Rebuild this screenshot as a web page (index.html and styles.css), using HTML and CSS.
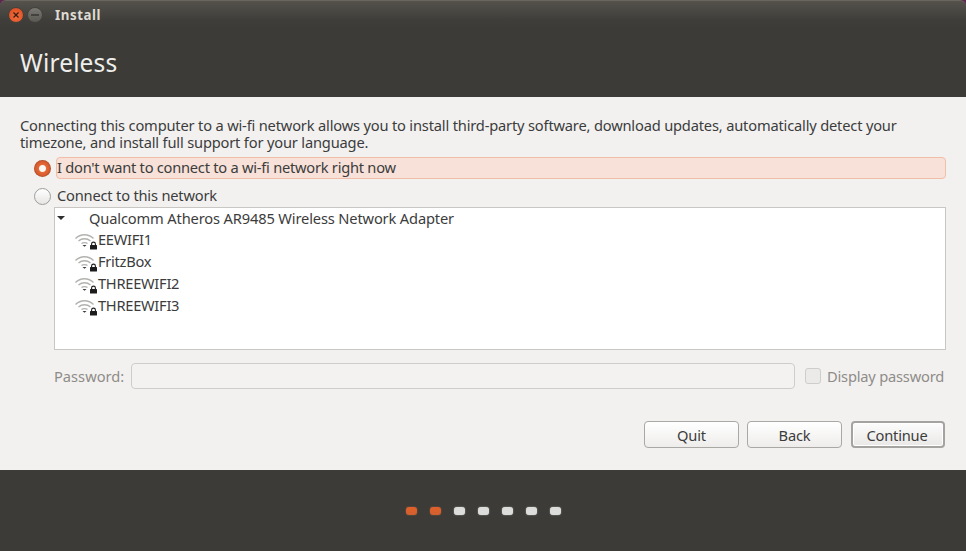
FILE: index.html
```html
<!DOCTYPE html>
<html lang="en">
<head>
<meta charset="utf-8">
<title>Install</title>
<link rel="stylesheet" href="styles.css">
</head>
<body>
<div class="window">
  <header class="titlebar">
    <span class="wm wm-close"><svg width="10" height="10" viewBox="0 0 10 10"><path d="M2.5 2.5l5 5M7.5 2.5l-5 5" stroke="#3c1a10" stroke-width="1.3"/></svg></span>
    <span class="wm wm-min"><svg width="10" height="10" viewBox="0 0 10 10"><path d="M1 5h8" stroke="#2e2d2a" stroke-width="1.3"/></svg></span>
    <span class="app-title">Install</span>
  </header>
  <div class="heading"><h1>Wireless</h1></div>
  <main class="content">
    <p class="intro">Connecting this computer to a wi-fi network allows you to install third-party software, download updates, automatically detect your timezone, and install full support for your language.</p>
    <div class="option option-selected">
      <span class="radio radio-on"></span>
      <span class="option-label">I don't want to connect to a wi-fi network right now</span>
    </div>
    <div class="option option-plain">
      <span class="radio"></span>
      <span class="option-label">Connect to this network</span>
    </div>
    <div class="netlist">
      <div class="adapter"><span class="arrow"></span><span>Qualcomm Atheros AR9485 Wireless Network Adapter</span></div>
      <div class="net"><svg class="wifi" width="24" height="20" viewBox="0 0 24 20"><use href="#wifi-icon"/></svg><span>EEWIFI1</span></div>
      <div class="net"><svg class="wifi" width="24" height="20" viewBox="0 0 24 20"><use href="#wifi-icon"/></svg><span>FritzBox</span></div>
      <div class="net"><svg class="wifi" width="24" height="20" viewBox="0 0 24 20"><use href="#wifi-icon"/></svg><span>THREEWIFI2</span></div>
      <div class="net"><svg class="wifi" width="24" height="20" viewBox="0 0 24 20"><use href="#wifi-icon"/></svg><span>THREEWIFI3</span></div>
    </div>
    <div class="password-row">
      <label class="pw-label">Password:</label>
      <div class="pw-input"></div>
      <span class="check"></span>
      <span class="pw-show">Display password</span>
    </div>
    <div class="actions">
      <button class="btn">Quit</button>
      <button class="btn">Back</button>
      <button class="btn btn-default">Continue</button>
    </div>
  </main>
  <footer class="progress">
    <span class="dot dot-done"></span>
    <span class="dot dot-done"></span>
    <span class="dot"></span>
    <span class="dot"></span>
    <span class="dot"></span>
    <span class="dot"></span>
    <span class="dot"></span>
  </footer>
</div>
<svg class="defs" width="0" height="0">
  <defs>
    <g id="wifi-icon">
      <g fill="none" stroke="#b2b2ae" stroke-width="1.4">
        <path d="M1.5 8.5C6.5 3.5 14.5 3.5 19.5 8.5"/>
        <path d="M4.5 11C8 8 13 8 16.5 11"/>
        <path d="M7.5 13.5C9 12.3 12 12.3 13.5 13.5"/>
      </g>
      <path d="M8.5 15h4l-2 1.8z" fill="#3a3a3a"/>
      <rect x="16" y="15" width="7" height="4.5" rx="0.5" fill="#1c1c1c"/>
      <path d="M17.6 15.2v-1.2a1.9 1.9 0 0 1 3.8 0v1.2" fill="none" stroke="#1c1c1c" stroke-width="1.1"/>
    </g>
  </defs>
</svg>
</body>
</html>
```
FILE: styles.css
```css
* { box-sizing: border-box; }
html, body { margin: 0; padding: 0; background: #5e2750; }
body { width: 966px; height: 551px; overflow: hidden; font-family: "Noto Sans", "Open Sans", sans-serif; font-size: 14.67px; color: #3c3c3c; }
.window { width: 966px; height: 551px; display: flex; flex-direction: column; }
.titlebar { height: 28px; flex: none; display: flex; align-items: center; padding: 0 0 0 8px; gap: 3px; border-radius: 6px 6px 0 0; background: linear-gradient(#55524c, #3f3e3a 70%, #3c3b37); border-top: 1px solid #6a665f; }
.wm { width: 16px; height: 16px; border-radius: 50%; display: flex; align-items: center; justify-content: center; }
.wm-close { background: radial-gradient(circle at 50% 60%, #f2733f, #d9431c); border: 1px solid #45403a; }
.wm-min { background: linear-gradient(#7a7872, #5a5852); border: 1px solid #45403a; }
.app-title { margin-left: 9px; color: #dfdbd2; font-size: 13.3px; font-weight: 700; letter-spacing: 0.55px; }
.heading { height: 69px; flex: none; background: #3c3b37; padding: 19px 0 0 20px; }
h1 { margin: 0; color: #eeeeec; font-size: 24.5px; line-height: 32px; font-weight: 400; letter-spacing: 0.15px; }
.content { height: 373px; flex: none; background: #f2f1f0; padding: 20px 20px 0; display: flex; flex-direction: column; }
.intro { margin: 0; line-height: 17px; height: 34px; width: 900px; letter-spacing: -0.18px; }
.option { display: flex; align-items: center; gap: 5px; height: 22px; }
.option-selected { margin-top: 6px; margin-left: 14px; }
.option-plain { margin-top: 6px; margin-left: 14px; }
.option-label { flex: 1; height: 22px; line-height: 18px; letter-spacing: -0.25px; border: 1px solid transparent; }
.option-plain .option-label { letter-spacing: -0.2px; }
.option-selected .option-label { background: #f7e1d8; border-color: #f0bda9; border-radius: 4px; }
.radio { width: 17px; height: 17px; border-radius: 50%; background: linear-gradient(#fff, #e6e5e3); border: 1px solid #9d9d99; flex: none; }
.radio-on { border: 0; background: radial-gradient(circle, #fbf6f2 0 3px, #e3693a 4px, #d85a2c 7px, #a54a2b 8.5px); }
.netlist { margin: 0 0 0 34px; height: 143px; background: #fff; border: 1px solid #c9c7c4; }
.adapter { height: 21px; display: flex; align-items: center; letter-spacing: -0.15px; padding-left: 2px; padding-bottom: 2px; }
.arrow { width: 0; height: 0; border-left: 4px solid transparent; border-right: 4px solid transparent; border-top: 4px solid #2e2e2e; margin-right: 24px; margin-top: 1px; }
.net { height: 22px; display: flex; align-items: center; padding-left: 19px; letter-spacing: -0.28px; }
.net span { margin-top: -2px; }
.wifi { flex: none; display: block; }
.defs { position: absolute; }
.password-row { margin: 13px 0 0 34px; height: 26px; display: flex; align-items: center; color: #8f8c88; letter-spacing: -0.2px; }
.pw-label { width: 77px; flex: none; letter-spacing: 0; }
.pw-input { width: 664px; height: 26px; border: 1px solid #cfcdca; border-radius: 4px; background: #f3f2f1; flex: none; }
.check { width: 16px; height: 16px; margin-left: 10px; border: 1px solid #cfcdca; border-radius: 3px; background: #ebeae8; flex: none; }
.pw-show { margin-left: 6px; white-space: nowrap; }
.actions { margin-top: 32px; display: flex; justify-content: flex-end; gap: 8px; padding-right: 1px; }
.btn { width: 95px; height: 27px; padding: 0; font: inherit; color: #3c3c3c; letter-spacing: -0.2px; border: 1px solid #aaa8a4; border-radius: 4px; background: linear-gradient(#fff, #eeedeb); }
.btn-default { width: 94px; margin-left: 1px; padding-right: 2px; border: 2px solid #a5a3a0; box-shadow: inset 0 0 0 1px #fff; background: linear-gradient(#fcfcfc, #e9e8e6); }
.progress { flex: 1; background: #3c3b37; display: flex; justify-content: center; align-items: center; gap: 13px; padding-top: 1px; }
.dot { width: 11px; height: 8px; border-radius: 3px; background: #dcdcda; box-shadow: 0 0 1.5px #b5b5b3; }
.dot-done { background: linear-gradient(#e0602a, #d0602f); box-shadow: 0 0 1.5px #a86a4e; }
```
